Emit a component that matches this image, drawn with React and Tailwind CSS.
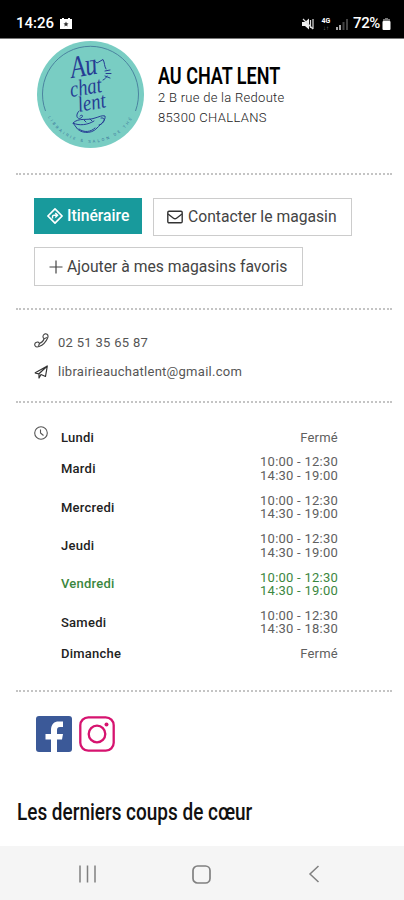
import React from 'react';

const hours = [
  { day: 'Lundi', slots: ['Fermé'] },
  { day: 'Mardi', slots: ['10:00 - 12:30', '14:30 - 19:00'] },
  { day: 'Mercredi', slots: ['10:00 - 12:30', '14:30 - 19:00'] },
  { day: 'Jeudi', slots: ['10:00 - 12:30', '14:30 - 19:00'] },
  { day: 'Vendredi', slots: ['10:00 - 12:30', '14:30 - 19:00'], today: true },
  { day: 'Samedi', slots: ['10:00 - 12:30', '14:30 - 18:30'] },
  { day: 'Dimanche', slots: ['Fermé'] },
];

const StatusBar = () => (
  <div className="h-[39px] shrink-0 bg-black text-white flex items-center justify-between pl-4 pr-[13px] pt-[9px] border-b border-[#777]">
    <div className="flex items-center">
      <span className="text-[15px] font-medium leading-none w-[39px]">14:26</span>
      <svg className="w-3 h-3 ml-[5px]" viewBox="0 0 12 12">
        <path d="M0 1H2V0H4V1H8V0H10V1H12V11H0Z" fill="#fff" />
        <path d="M6 3.500L6.800 5.200L8.500 5.500L7.200 6.700L7.600 8.500L6 7.600L4.400 8.500L4.800 6.700L3.500 5.500L5.200 5.200Z" fill="#333" />
      </svg>
    </div>
    <div className="flex items-center">
      <svg className="w-3 h-3" viewBox="0 0 12 12" fill="#eee">
        <path d="M0 4H3L7 0.500V11.500L3 8H0Z" />
        <path d="M8.500 2V10M11 1V11M1 1L11 11" stroke="#ddd" strokeWidth="1.200" />
      </svg>
      <div className="w-[10px] ml-[7px] flex flex-col items-center">
        <span className="text-[7px] leading-[7px] font-bold">4G</span>
        <span className="text-[6px] leading-[5px] text-[#777]">↓↑</span>
      </div>
      <svg className="w-[12px] h-3 ml-[5px]" viewBox="0 0 12 12">
        <path d="M0 9H2V12H0ZM3 7H5V12H3Z" fill="#aaa" />
        <path d="M6.500 4H8.500V12H6.500ZM10 1H12V12H10Z" fill="#444" />
      </svg>
      <span className="text-[15px] font-medium leading-none ml-[5px] w-[29px] tracking-[-0.4px]">72%</span>
      <svg className="w-[9px] h-3" viewBox="0 0 9 12">
        <path d="M3 0H6V1H8V3H1V1H3Z" fill="#777" />
        <rect x="0.500" y="3" width="8" height="9" rx="1" fill="#fff" />
      </svg>
    </div>
  </div>
);

const Logo = () => (
  <svg className="w-[107px] h-[107px] shrink-0" viewBox="0 0 107 107">
    <defs>
      <path id="tagline" d="M11 76A48 48 0 0 0 96 76" />
    </defs>
    <circle cx="53.500" cy="53.500" r="53.500" fill="#79cdc3" />
    <path d="M8.500 70A48 48 0 1 1 98.500 70" fill="none" stroke="#457b9b" strokeWidth="0.900" />
    <g fill="#263c94" fontFamily="'Liberation Serif', serif" fontStyle="italic">
      <text fontSize="31" transform="translate(35 37) rotate(-10)" textLength="27" lengthAdjust="spacingAndGlyphs">Au</text>
      <text fontSize="23" transform="translate(34 56) rotate(-9)" textLength="32" lengthAdjust="spacingAndGlyphs">chat</text>
      <text fontSize="22" transform="translate(42 71) rotate(-10)" textLength="28" lengthAdjust="spacingAndGlyphs">lent</text>
    </g>
    <g fill="none" stroke="#263c94" strokeWidth="1" strokeLinecap="round" strokeLinejoin="round">
      {/* cat head and whiskers */}
      <path d="M53 20C56 19 58 20 60 22L66 18.500C68 22 67 25 69 28M70 35C69 37 68 38 66 39" />
      <path d="M68 30L73 29M69 32.500L74 32.500M68 35L73 37" />
      {/* cup with steam */}
      <path d="M42 70C38 74 40 79 44 77C47 75 45 73 43 75M36 82C42 76 50 80 58 77C62 76 65 74 68 75C69 79 64 83 60 87C54 94 42 92 39 86L36 82C42 85 51 84 57 80M47 79L49 81M53 78L55 80M64 77C70 76 67 83 62 84M42 88C47 92 54 91 58 87" />
    </g>
    <text fill="#39749a" fontSize="4" fontFamily="Roboto, sans-serif">
      <textPath href="#tagline" textLength="102">LIBRAIRIE &amp; SALON DE THÉ</textPath>
    </text>
  </svg>
);

const Divider = () => <div className="ml-4 mr-3 shrink-0 border-t-2 border-dotted border-[#c4c4c4]" />;

const StoreHeader = () => (
  <div className="flex h-[134px] shrink-0 pl-[37px] pt-[2px]">
    <Logo />
    <div className="ml-[14px] pt-[21px] whitespace-nowrap">
      <h1 className="text-[24px] leading-7 font-semibold text-black origin-left scale-x-[0.75]">AU CHAT LENT</h1>
      <p className="text-[13px] leading-5 font-light text-[#222] tracking-[0.28px] -mt-[2px]">2 B rue de la Redoute</p>
      <p className="text-[13px] leading-5 font-light text-[#222] tracking-[0.35px]">85300 CHALLANS</p>
    </div>
  </div>
);

const Actions = () => (
  <div className="h-[133px] shrink-0 pl-[34px] pt-[23px] flex flex-wrap content-start items-start gap-x-[11px] gap-y-[11px] text-[15.700px] whitespace-nowrap text-[#444]">
    <button className="w-[108px] h-9 bg-[#189a9c] text-white font-medium flex items-center pl-[13px]">
      <svg className="w-4 h-4 mr-1 shrink-0" viewBox="0 0 16 16" fill="none" stroke="currentColor" strokeWidth="1.700">
        <path d="M8 0.900L15.100 8L8 15.100L0.900 8Z" strokeLinejoin="round" />
        <path d="M5.500 10.500V8.500Q5.500 7.300 7 7.300H10M8.300 5L10.600 7.300L8.300 9.600" strokeWidth="1.400" />
      </svg>
      <span>Itinéraire</span>
    </button>
    <button className="w-[199px] h-[38px] border border-[#ccc] flex items-center pl-[13px]">
      <svg className="w-4 h-4 mr-[5px] shrink-0" viewBox="0 0 16 16" fill="none" stroke="#333" strokeWidth="1.400" strokeLinejoin="round">
        <rect x="0.800" y="2.200" width="14.400" height="11.600" rx="1.200" />
        <path d="M1 5L6.500 9.200Q8 10.300 9.500 9.200L15 5" />
      </svg>
      <span>Contacter le magasin</span>
    </button>
    <button className="w-[269px] h-[39px] border border-[#ccc] flex items-center pl-[14px]">
      <svg className="w-[14px] h-[14px] mr-[4px] shrink-0" viewBox="0 0 14 14" stroke="#444" strokeWidth="1.200">
        <path d="M7 0.500V13.500M0.500 7H13.500" />
      </svg>
      <span>Ajouter à mes magasins favoris</span>
    </button>
  </div>
);

const Contact = () => (
  <div className="h-[91px] shrink-0 pl-[34px] pt-[18px] text-[13px] text-[#555]">
    <div className="flex items-center h-[29px]">
      <svg className="w-[15px] h-[15px] mr-[9px] mb-[5px]" viewBox="0 0 15 15" fill="none" stroke="#444" strokeWidth="1.100" strokeLinejoin="round">
        <path d="M9.500 2C10.500 0.700 12 0.500 13 1.300C14.300 2.300 14.300 3.500 13.600 5C12 9 9 12 5 13.600C3.500 14.200 2 14.200 1.200 13C0.300 11.600 0.700 10.300 2 9.500C3.500 8.600 5 9 5.400 10.500C7.500 9.800 9.300 8 10.300 5.500C8.900 5 8.600 3.300 9.500 2Z" />
        <path d="M5.400 10.500C5.500 11.500 5 12.200 4 12.500M10.300 5.500C11.300 5.600 12.300 5 12.500 4" />
      </svg>
      <span className="tracking-[0.3px]">02 51 35 65 87</span>
    </div>
    <div className="flex items-center h-[29px]">
      <svg className="w-[14px] h-[14px] mr-[10px]" viewBox="0 0 14 14" fill="none" stroke="#333" strokeWidth="1.200" strokeLinejoin="round">
        <path d="M0.800 8L13.300 1L11.500 11.500L7 9.500L5 13V8.800L13.300 1M0.800 8L5 8.800" />
      </svg>
      <span className="tracking-[0.27px]">librairieauchatlent@gmail.com</span>
    </div>
  </div>
);

const Hours = () => (
  <div className="h-[287px] shrink-0 flex pl-[34px] pt-[22px]">
    <svg className="w-[14px] h-[14px] mt-[1px]" viewBox="0 0 14 14" fill="none" stroke="#555" strokeWidth="1.100">
      <circle cx="7" cy="7" r="6.300" />
      <path d="M6.500 3.500V7L9.500 9.500" />
    </svg>
    <div className="ml-[13px] w-[277px]">
      {hours.map(({ day, slots, today }) => (
        <div
          key={day}
          className={`flex items-center justify-between text-[13px] leading-[13.600px] tracking-[0.24px] py-[5.600px] ${today ? 'text-[#3b8740]' : 'text-[#222]'}`}
        >
          <span className="font-medium">{day}</span>
          <div className={`text-right ${today ? '' : 'text-[#606060]'}`}>
            {slots.map((slot) => <div key={slot}>{slot}</div>)}
          </div>
        </div>
      ))}
    </div>
  </div>
);

const Social = () => (
  <div className="flex shrink-0 gap-[7px] pl-9 pt-[24px]">
    <svg className="w-9 h-9" viewBox="0 0 36 36">
      <rect width="36" height="36" rx="3" fill="#3b5998" />
      <path d="M15 36V23.500H9.500V18H15V14C15 8 18.500 5.500 22.500 5.500H27V11H24C21.500 11 21 12.500 21 14.500V18H27L26 23.500H21V36Z" fill="#fff" />
    </svg>
    <svg className="w-9 h-9" viewBox="0 0 36 36" fill="none" stroke="#d6136f" strokeWidth="2.300">
      <rect x="1.300" y="1.300" width="33.400" height="33.400" rx="8" />
      <circle cx="18" cy="18" r="8.300" />
      <circle cx="27.500" cy="8.500" r="2" fill="#d6136f" stroke="none" />
    </svg>
  </div>
);

const NavBar = () => (
  <div className="h-[54px] bg-[#f5f5f5] flex items-center pl-[79px] pt-[2px]">
    <svg className="w-[17px] h-[18px]" viewBox="0 0 17 18" stroke="#808080" strokeWidth="1.500">
      <path d="M1 0.500V17.500M8.500 0.500V17.500M16 0.500V17.500" />
    </svg>
    <svg className="w-[19px] h-[19px] ml-[95.500px]" viewBox="0 0 19 19" fill="none" stroke="#808080" strokeWidth="1.700">
      <rect x="1" y="1" width="17" height="17" rx="4.500" />
    </svg>
    <svg className="w-[12px] h-[18px] ml-[97px]" viewBox="0 0 12 18" fill="none" stroke="#808080" strokeWidth="1.500">
      <path d="M10.500 1L2 9L10.500 17" />
    </svg>
  </div>
);

const App = () => {
  return (
    <div className="w-[404px] h-[900px] bg-white overflow-hidden flex flex-col font-[Roboto,sans-serif]">
      <StatusBar />
      <StoreHeader />
      <Divider />
      <Actions />
      <Divider />
      <Contact />
      <Divider />
      <Hours />
      <Divider />
      <Social />
      <h2 className="mt-[44px] ml-[17px] shrink-0 text-[24px] leading-8 font-medium text-[#111] whitespace-nowrap origin-left scale-x-[0.79]">
        Les derniers coups de cœur
      </h2>
      <div className="mt-auto shrink-0">
        <NavBar />
      </div>
    </div>
  );
};

export default App;
